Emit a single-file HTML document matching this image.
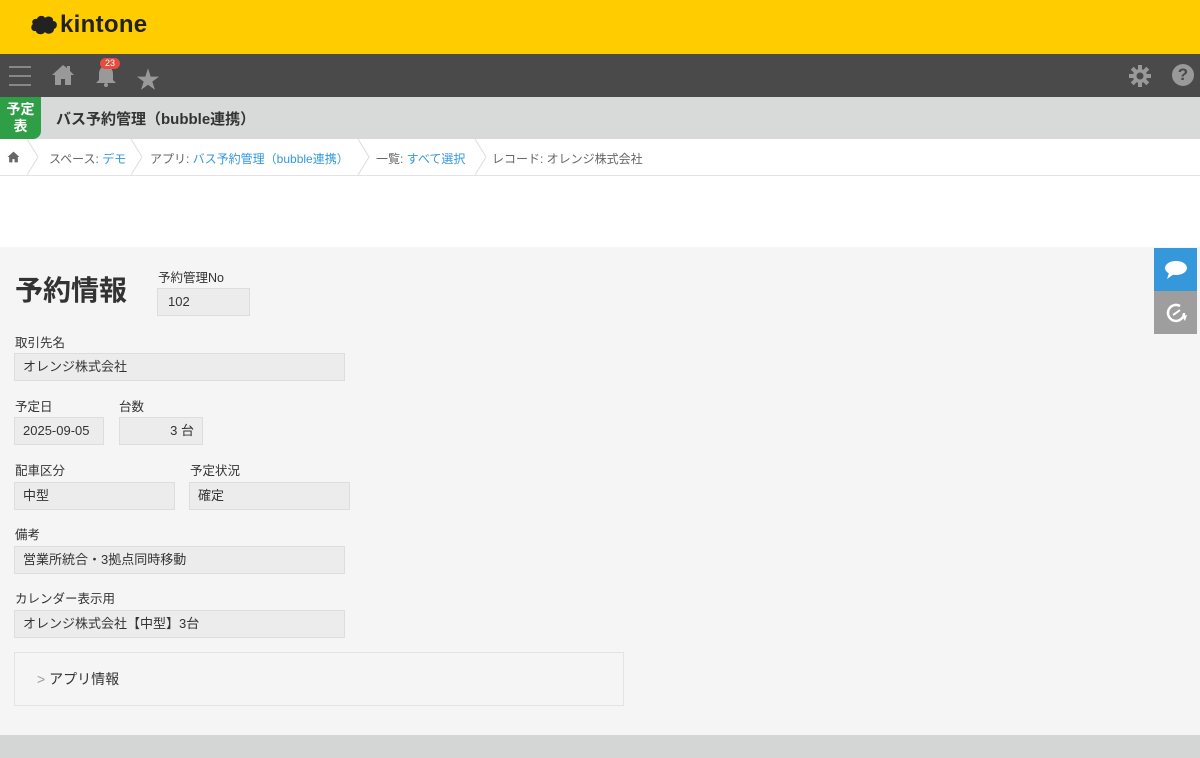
<!DOCTYPE html>
<html><head><meta charset="utf-8"><style>
*{margin:0;padding:0;box-sizing:border-box}
body{width:1200px;height:758px;overflow:hidden;background:#fff;font-family:"Liberation Sans","Noto Sans CJK JP",sans-serif;color:#333;position:relative}
.abs{position:absolute}
.top{top:0;left:0;width:1200px;height:54px;background:#ffcc00}
.nav{top:54px;left:0;width:1200px;height:43px;background:#4a4a4a}
.apph{top:97px;left:0;width:1200px;height:42px;background:#d8d9d9}
.bc{top:139px;left:0;width:1200px;height:37px;border-bottom:1px solid #e3e3e3;font-size:12px;color:#666}
.rec{top:247px;left:0;width:1200px;height:488px;background:#f5f5f5}
.foot{top:735px;left:0;width:1200px;height:23px;background:#d4d6d5}
.lbl{font-size:12.5px;color:#333}
.box{background:#ececec;border:1px solid #ddd;font-size:13px;color:#333;height:28px;line-height:26px;padding-left:8px}
a{color:#3498db;text-decoration:none}
</style></head><body>
<div class="abs top">
 <svg class="abs" style="left:29px;top:14px" width="30" height="22" viewBox="0 0 30 22"><path d="M4 10C2 8 4 4 8 5C9 1 15 1 16 4C19 1 25 3 24 7C29 7 29 14 25 15C25 20 18 21 16 18C13 22 7 20 7 17C2 18 1 12 4 10Z" fill="#222"/></svg>
 <div class="abs" style="left:60px;top:11px;font-size:24px;font-weight:bold;color:#222;letter-spacing:0.3px">kintone</div>
</div>
<div class="abs nav">
 <div class="abs" style="left:9px;top:12px;width:22px;height:2px;background:#888;box-shadow:0 9px 0 #888,0 18px 0 #888"></div>
 <svg class="abs" style="left:51px;top:10px" width="24" height="22" viewBox="0 0 24 22"><path d="M12 1L1 11H4V21H10V15H14V21H20V11H23L19 7V2H16V4Z" fill="#999"/></svg>
 <svg class="abs" style="left:95px;top:10px" width="22" height="24" viewBox="0 0 22 24"><path d="M11 2C6 2 4 6 4 10V16L1 19H21L18 16V10C18 6 16 2 11 2Z" fill="#999"/><circle cx="11" cy="21" r="2" fill="#999"/></svg>
 <div class="abs" style="left:100px;top:4px;width:20px;height:11px;border-radius:6px;background:#e74c3c;color:#fff;font-size:9px;line-height:11px;text-align:center">23</div>
 <div class="abs" style="left:136px;top:6px;font-size:24px;color:#999">★</div>
 <svg class="abs" style="left:1129px;top:11px" width="22" height="22" viewBox="0 0 22 22"><g fill="#999"><circle cx="11" cy="11" r="7"/><rect x="9" y="0" width="4" height="22"/><rect x="0" y="9" width="22" height="4"/><rect x="9" y="0" width="4" height="22" transform="rotate(45 11 11)"/><rect x="9" y="0" width="4" height="22" transform="rotate(-45 11 11)"/></g><circle cx="11" cy="11" r="3.5" fill="#4a4a4a"/></svg>
 <div class="abs" style="left:1172px;top:10px;width:22px;height:22px;border-radius:50%;background:#999;color:#4a4a4a;font-weight:bold;font-size:17px;line-height:22px;text-align:center">?</div>
</div>
<div class="abs apph">
 <div class="abs" style="left:0;top:0;width:41px;height:42px;background:#2e9e47;border-radius:0 0 8px 0;color:#fff;font-weight:bold;font-size:14px;line-height:17px;text-align:center;padding-top:4px">予定<br>表</div>
 <div class="abs" style="left:56px;top:11px;font-size:15px;font-weight:bold;color:#333">バス予約管理（bubble連携）</div>
</div>
<div class="abs bc">
 <svg class="abs" style="left:0;top:0" width="500" height="37"><g fill="none" stroke="#ddd"><path d="M27 0L38 18L27 36"/><path d="M131 0L142 18L131 36"/><path d="M358 0L369 18L358 36"/><path d="M475 0L486 18L475 36"/></g></svg>
 <svg class="abs" style="left:7px;top:12px" width="13" height="12" viewBox="0 0 24 22"><path d="M12 1L1 11H4V21H10V15H14V21H20V11H23Z" fill="#666"/></svg>
 <div class="abs" style="left:49px;top:11px">スペース: <a>デモ</a></div>
 <div class="abs" style="left:150px;top:11px">アプリ: <a>バス予約管理（bubble連携）</a></div>
 <div class="abs" style="left:376px;top:11px">一覧: <a>すべて選択</a></div>
 <div class="abs" style="left:492px;top:11px">レコード: オレンジ株式会社</div>
</div>
<div class="abs rec">
 <div class="abs" style="left:15px;top:22px;font-size:28px;font-weight:bold;color:#333">予約情報</div>
 <div class="abs lbl" style="left:158px;top:20px">予約管理No</div>
 <div class="abs box" style="left:157px;top:41px;width:93px;padding-left:10px">102</div>
 <div class="abs lbl" style="left:15px;top:85px">取引先名</div>
 <div class="abs box" style="left:14px;top:106px;width:331px">オレンジ株式会社</div>
 <div class="abs lbl" style="left:15px;top:149px">予定日</div>
 <div class="abs box" style="left:14px;top:170px;width:90px">2025-09-05</div>
 <div class="abs lbl" style="left:119px;top:149px">台数</div>
 <div class="abs box" style="left:119px;top:170px;width:84px;text-align:right;padding-right:8px">3 台</div>
 <div class="abs lbl" style="left:15px;top:213px">配車区分</div>
 <div class="abs box" style="left:14px;top:235px;width:161px">中型</div>
 <div class="abs lbl" style="left:190px;top:213px">予定状況</div>
 <div class="abs box" style="left:189px;top:235px;width:161px">確定</div>
 <div class="abs lbl" style="left:15px;top:277px">備考</div>
 <div class="abs box" style="left:14px;top:299px;width:331px">営業所統合・3拠点同時移動</div>
 <div class="abs lbl" style="left:15px;top:341px">カレンダー表示用</div>
 <div class="abs box" style="left:14px;top:363px;width:331px">オレンジ株式会社【中型】3台</div>
 <div class="abs" style="left:14px;top:405px;width:610px;height:54px;border:1px solid #e3e3e3;background:#f5f5f5">
  <div class="abs" style="left:22px;top:16px;font-size:14px;color:#333"><span style="color:#999">&gt;</span> アプリ情報</div>
 </div>
 <div class="abs" style="left:1154px;top:1px;width:43px;height:43px;background:#3498db">
  <svg class="abs" style="left:10px;top:12px" width="24" height="20" viewBox="0 0 24 20"><ellipse cx="12" cy="8" rx="11" ry="7" fill="#fff"/><path d="M5 13L3 19L10 14Z" fill="#fff"/></svg>
 </div>
 <div class="abs" style="left:1154px;top:44px;width:43px;height:43px;background:#9e9e9e">
  <svg class="abs" style="left:11px;top:11px" width="22" height="22" viewBox="0 0 22 22"><path d="M19 11A8 8 0 1 1 15 4" fill="none" stroke="#fff" stroke-width="2.5"/><path d="M11 11L15 8M11 11L8 13" stroke="#fff" stroke-width="2"/><path d="M17 14L20 19L22 13Z" fill="#fff"/></svg>
 </div>
</div>
<div class="abs foot"></div>
</body></html>
